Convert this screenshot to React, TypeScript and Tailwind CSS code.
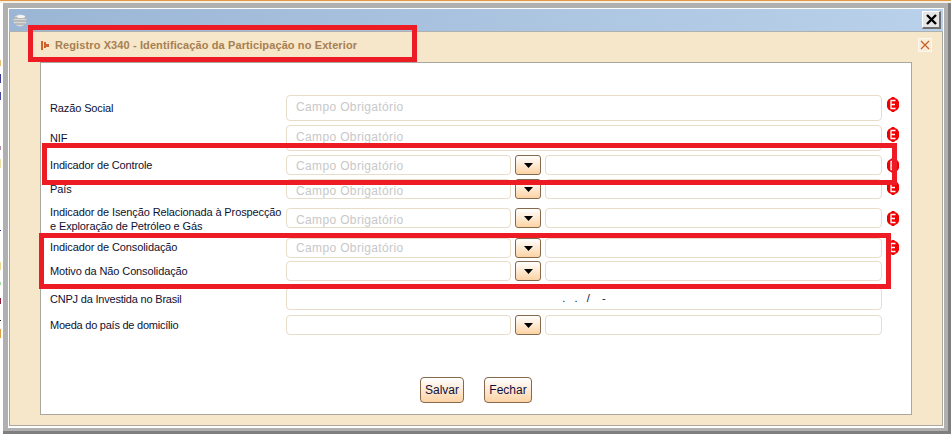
const specks = [
  { top: 60, h: 6, c: "#e8c070" },
  { top: 74, h: 9, c: "#3a3a90" },
  { top: 92, h: 8, c: "#4a4aa0" },
  { top: 146, h: 4, c: "#b090a8" },
  { top: 159, h: 9, c: "#eee0a0" },
  { top: 230, h: 1, c: "#202090" },
  { top: 262, h: 8, c: "#f0d890" },
  { top: 282, h: 3, c: "#a0e0a0" },
  { top: 298, h: 6, c: "#902040" },
  { top: 320, h: 1, c: "#202020" },
  { top: 329, h: 9, c: "#e0a040" },
];

type Row = {
  label: string;
  top: string;
  h: string;
  kind: "full" | "select" | "cnpj";
  placeholder?: boolean;
  nudge?: string;
  badge?: string;
  labelClass: string;
};

const rows: Row[] = [
  { label: "Razão Social", top: "mt-0", h: "h-[26px]", kind: "full", placeholder: true, nudge: "pb-[2px]", badge: "mb-2", labelClass: "tracking-[-0.12px]" },
  { label: "NIF", top: "mt-1", h: "h-[26px]", kind: "full", placeholder: true, nudge: "pb-[2px]", badge: "mb-2", labelClass: "tracking-[-0.12px]" },
  { label: "Indicador de Controle", top: "mt-1", h: "h-5", kind: "select", placeholder: true, nudge: "pt-[2px]", badge: "mb-0", labelClass: "tracking-[-0.14px]" },
  { label: "País", top: "mt-1", h: "h-5", kind: "select", placeholder: true, nudge: "pt-1", badge: "mb-1", labelClass: "tracking-[-0.12px]" },
  { label: "Indicador de Isenção Relacionada à Prospecção\ne Exploração de Petróleo e Gás", top: "mt-[9px]", h: "h-5", kind: "select", placeholder: true, nudge: "pt-1", badge: "mb-0", labelClass: "mt-[2px] tracking-[-0.12px]" },
  { label: "Indicador de Consolidação", top: "mt-[10px]", h: "h-5", kind: "select", placeholder: true, nudge: "pt-0", badge: "mb-[2px]", labelClass: "mb-[2px] tracking-[-0.12px]" },
  { label: "Motivo da Não Consolidação", top: "mt-[3px]", h: "h-5", kind: "select", labelClass: "tracking-[-0.12px]" },
  { label: "CNPJ da Investida no Brasil", top: "mt-[6px]", h: "h-[23px]", kind: "cnpj", labelClass: "tracking-[-0.2px]" },
  { label: "Moeda do país de domicílio", top: "mt-[5px]", h: "h-5", kind: "select", labelClass: "tracking-[-0.24px]" },
];

function ErrorBadge() {
  return (
    <svg width="12" height="15" viewBox="0 0 12 15" className="shrink-0">
      <polygon points="4,1 5,0 7,0 8,1 10,2 11,3 12,5 12,10 11,12 10,13 8,14 7,15 5,15 4,14 2,13 1,12 0,10 0,5 1,3 2,2" fill="#f00000" />
      <path d="M3.5 3.5 H8.5 M3.5 7.5 H8 M3.5 11.5 H8.5 M4 3.5 V11.5" stroke="#fff" strokeWidth="1.3" fill="none" />
    </svg>
  );
}

function Field({ className, placeholder, children }: { className: string; placeholder?: boolean; children?: React.ReactNode }) {
  return (
    <div className={`flex h-full items-center rounded-[4px] border border-[#e8dccb] bg-white ${className}`}>
      {placeholder ? <span className="pl-[9px] text-[12px] tracking-[0.36px] text-[#c8c8c8]">Campo Obrigatório</span> : children}
    </div>
  );
}

function Arrow() {
  return (
    <button className="flex h-full w-[26px] shrink-0 items-center justify-center rounded-[3px] border border-[#85694a] bg-gradient-to-b from-white to-[#fcd3a4]">
      <svg width="9" height="5" viewBox="0 0 9 5">
        <polygon points="0,0 9,0 4.5,5" fill="#000" />
      </svg>
    </button>
  );
}

function FormRow({ row }: { row: Row }) {
  return (
    <div className={`flex items-center ${row.top} ${row.h}`}>
      <div className={`w-[236px] shrink-0 whitespace-pre-line text-[11px] leading-[14px] text-[#101030] ${row.labelClass}`}>{row.label}</div>
      <div className="flex h-full w-[596px] shrink-0 gap-1">
        {row.kind === "full" && <Field className={`w-full ${row.nudge ?? ""}`} placeholder={row.placeholder} />}
        {row.kind === "cnpj" && (
          <Field className="w-full justify-center">
            <span className="whitespace-pre text-[11px] text-[#101030]">{".   .   /    -"}</span>
          </Field>
        )}
        {row.kind === "select" && (
          <>
            <Field className={`w-[225px] shrink-0 ${row.nudge ?? ""}`} placeholder={row.placeholder} />
            <Arrow />
            <Field className="min-w-0 flex-1" />
          </>
        )}
      </div>
      {row.badge && (
        <div className={`ml-[5px] flex ${row.badge}`}>
          <ErrorBadge />
        </div>
      )}
    </div>
  );
}

function ActionButton({ children, className }: { children: React.ReactNode; className: string }) {
  return (
    <button className={`h-[26px] rounded-[4px] border border-[#85694a] bg-gradient-to-b from-white to-[#fcd3a4] text-[12px] text-[#101040] ${className}`}>
      {children}
    </button>
  );
}

const redBox = "pointer-events-none absolute border-[5px] border-[#ed1c24]";

export default function App() {
  return (
    <div className="relative flex h-[434px] w-[951px] flex-col overflow-hidden bg-white font-['Liberation_Sans',Arial,sans-serif]">
      <div className="h-px shrink-0 bg-[#e09a45]" />
      <div className="h-0.5 shrink-0 bg-[#f4f0e8]" />
      <div className="ml-[3px] min-h-0 flex-1 border-r-[3px] border-b-[3px] border-[#7f7f7f] bg-[#b0b0b0] pt-[5px] pr-[4px] pb-[3px] pl-[5px]">
        <div className="flex h-full flex-col border border-b-2 border-white">
          <div className="flex h-[22px] shrink-0 items-center justify-between bg-gradient-to-r from-[#9bb5d5] to-[#b9d1ea] pr-[2px] pl-[4px]">
            <svg width="14" height="13" viewBox="0 0 14 13">
              <ellipse cx="7" cy="6.5" rx="6.5" ry="6" fill="#d8d8d8" />
              <path d="M1 4 H13 M0.5 7 H13.5 M2 10 H12" stroke="#9a9a9a" strokeWidth="1" />
              <ellipse cx="8" cy="2.5" rx="4" ry="1.5" fill="#f4f4f4" />
            </svg>
            <button className="flex h-[18px] w-[19px] items-center justify-center border-t border-l border-t-white border-l-white border-r-2 border-b-2 border-r-[#707070] border-b-[#707070] bg-[#e6e6e6]">
              <svg width="11" height="11" viewBox="0 0 11 11">
                <path d="M1 1 L10 10 M10 1 L1 10" stroke="#000" strokeWidth="2.4" />
              </svg>
            </button>
          </div>
          <div className="mt-px flex min-h-0 flex-1 flex-col border-r border-b border-l border-[#a8a8a0] bg-[#f6e6ca]">
            <div className="flex h-[30px] shrink-0 items-center justify-between pr-[10px] pb-1 pl-[30px]">
              <div className="flex items-center gap-[5px]">
                <svg width="10" height="9" viewBox="0 0 10 9">
                  <rect x="1" y="0" width="2" height="9" fill="#d0622a" />
                  <rect x="4" y="1" width="2" height="6" fill="#d0622a" />
                  <rect x="6" y="3" width="3" height="3" fill="#d0622a" />
                </svg>
                <span className="text-[11px] font-bold tracking-[0.11px] text-[#a87f50]">
                  Registro X340 - Identificação da Participação no Exterior
                </span>
              </div>
              <button className="flex h-[14px] w-[14px] items-center justify-center border border-[#fdf8ef] bg-[#f9edd8]">
                <svg width="10" height="10" viewBox="0 0 10 10">
                  <path d="M1 1 L9 9 M9 1 L1 9" stroke="#c8602a" strokeWidth="1.3" />
                </svg>
              </button>
            </div>
            <div className="mr-[30px] mb-[10px] ml-[30px] min-h-0 flex-1 border border-[#a8a8a0] bg-white pt-8 pl-[9px]">
              {rows.map((row) => (
                <FormRow key={row.label} row={row} />
              ))}
              <div className="mt-[42px] flex gap-5 pl-[370px]">
                <ActionButton className="w-[44px]">Salvar</ActionButton>
                <ActionButton className="w-[48px]">Fechar</ActionButton>
              </div>
            </div>
          </div>
        </div>
      </div>

      {specks.map((s) => (
        <span key={s.top} className="absolute left-0 w-px" style={{ top: s.top, height: s.h, backgroundColor: s.c }} />
      ))}
      <div className={`${redBox} top-[25px] left-[28px] h-[37px] w-[389px]`} />
      <div className={`${redBox} top-[143px] left-[42px] h-[42px] w-[855px]`} />
      <div className={`${redBox} top-[233px] left-[39px] h-[56px] w-[852px]`} />
    </div>
  );
}
